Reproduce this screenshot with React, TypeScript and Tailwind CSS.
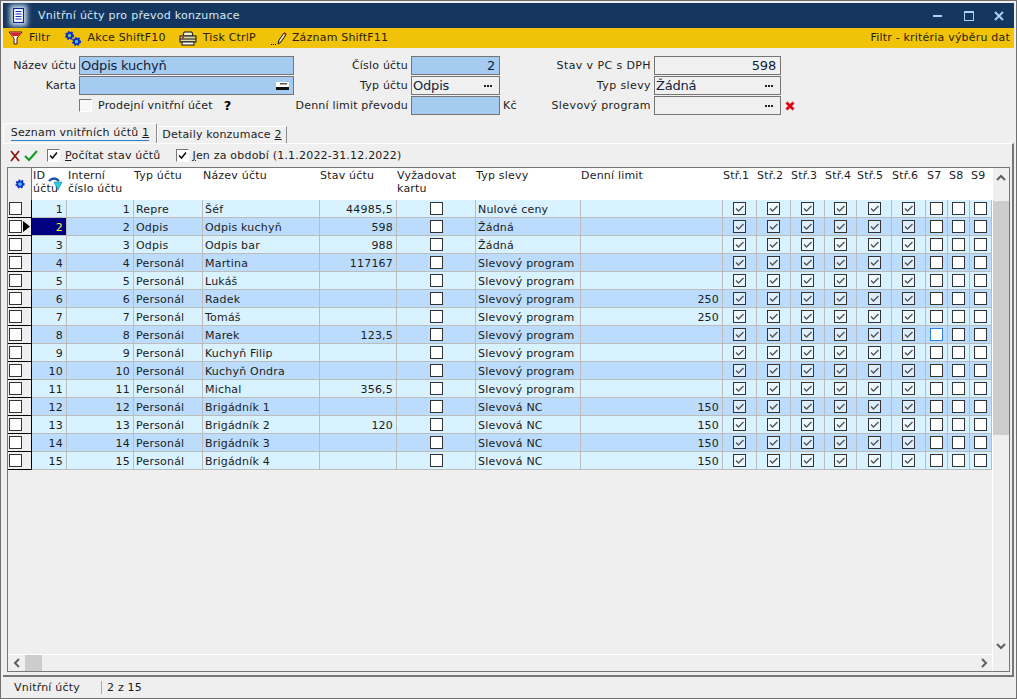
import React from "react";

type Row = {
	id: number;
	typ: string;
	nazev: string;
	stav: string;
	sleva: string;
	limit: string;
};

const rows: Row[] = [
	{ id: 1, typ: "Repre", nazev: "Šéf", stav: "44985,5", sleva: "Nulové ceny", limit: "" },
	{ id: 2, typ: "Odpis", nazev: "Odpis kuchyň", stav: "598", sleva: "Žádná", limit: "" },
	{ id: 3, typ: "Odpis", nazev: "Odpis bar", stav: "988", sleva: "Žádná", limit: "" },
	{ id: 4, typ: "Personál", nazev: "Martina", stav: "117167", sleva: "Slevový program", limit: "" },
	{ id: 5, typ: "Personál", nazev: "Lukáš", stav: "", sleva: "Slevový program", limit: "" },
	{ id: 6, typ: "Personál", nazev: "Radek", stav: "", sleva: "Slevový program", limit: "250" },
	{ id: 7, typ: "Personál", nazev: "Tomáš", stav: "", sleva: "Slevový program", limit: "250" },
	{ id: 8, typ: "Personál", nazev: "Marek", stav: "123,5", sleva: "Slevový program", limit: "" },
	{ id: 9, typ: "Personál", nazev: "Kuchyň Filip", stav: "", sleva: "Slevový program", limit: "" },
	{ id: 10, typ: "Personál", nazev: "Kuchyň Ondra", stav: "", sleva: "Slevový program", limit: "" },
	{ id: 11, typ: "Personál", nazev: "Michal", stav: "356,5", sleva: "Slevový program", limit: "" },
	{ id: 12, typ: "Personál", nazev: "Brigádník 1", stav: "", sleva: "Slevová NC", limit: "150" },
	{ id: 13, typ: "Personál", nazev: "Brigádník 2", stav: "120", sleva: "Slevová NC", limit: "150" },
	{ id: 14, typ: "Personál", nazev: "Brigádník 3", stav: "", sleva: "Slevová NC", limit: "150" },
	{ id: 15, typ: "Personál", nazev: "Brigádník 4", stav: "", sleva: "Slevová NC", limit: "150" },
];

const colWidths = [24, 35, 67, 69, 117, 77, 79, 105, 142, 34, 34, 34, 32, 35, 34, 22, 22, 22];
const strediska = ["Stř.1", "Stř.2", "Stř.3", "Stř.4", "Stř.5", "Stř.6"];

function GearIcon({ x = 0, y = 0, r = 4 }: { x?: number; y?: number; r?: number }) {
	return (
		<g>
			<circle cx={x} cy={y} r={r} fill="none" stroke="#0a2fd0" strokeWidth={r * 0.75} />
			<circle cx={x} cy={y} r={r + 1.2} fill="none" stroke="#0a2fd0" strokeWidth={1.6} strokeDasharray="1.6 1.6" />
			<circle cx={x} cy={y} r={r * 0.45} fill="#14d4f0" />
		</g>
	);
}

function GridBox({ checked, focus }: { checked?: boolean; focus?: boolean }) {
	return (
		<span
			className={`mx-auto flex h-[13px] w-[13px] items-center justify-center border ${
				checked ? "bg-white/50" : "bg-white"
			} ${focus ? "border-[#2f7fe0]" : "border-[#333333]"}`}
		>
			{checked && (
				<svg width="11" height="11" viewBox="0 0 11 11">
					<path d="M2 5.5 L4.5 8 L9.5 3" fill="none" stroke="#555555" strokeWidth="1.4" />
				</svg>
			)}
		</span>
	);
}

function BlackCheck({ light }: { light?: boolean }) {
	return (
		<span
			className={`flex h-[13px] w-[13px] shrink-0 items-center justify-center border border-[#777777] border-r-white border-b-white ${
				light ? "bg-[#f7f7f7]" : "bg-white"
			}`}
		>
			{!light && (
				<svg width="11" height="11" viewBox="0 0 11 11">
					<path d="M2 5.5 L4.5 8 L9 2.5" fill="none" stroke="#111111" strokeWidth="1.6" />
				</svg>
			)}
		</span>
	);
}

function Dots() {
	return (
		<svg width="8" height="2" viewBox="0 0 8 2" className="mr-[3px]">
			<path d="M0 0h2v2H0zM3 0h2v2H3zM6 0h2v2H6z" fill="#222222" />
		</svg>
	);
}

function Field({
	w,
	blue,
	right,
	children,
	tail,
}: {
	w: string;
	blue?: boolean;
	right?: boolean;
	children?: React.ReactNode;
	tail?: React.ReactNode;
}) {
	return (
		<div
			className={`flex h-[19px] items-center border border-[#757575] pl-[1px] pr-[4px] text-[13px] leading-none tracking-[-0.2px] text-[#10233a] ${w} ${
				blue ? "bg-[#a6cbf0]" : "bg-[#f0f0f0]"
			} ${right ? "justify-end" : "justify-between"}`}
		>
			{children && <span>{children}</span>}
			{!children && <span />}
			{tail}
		</div>
	);
}

function Label({ w, children }: { w: string; children: React.ReactNode }) {
	return <div className={`mr-[3px] shrink-0 whitespace-nowrap text-right ${w}`}>{children}</div>;
}

export default function App() {
	return (
		<div
			className="flex h-[699px] w-[1017px] flex-col border border-[#707070] bg-[#efefef] px-[2px] pt-[2px] text-[11px] leading-[14px] tracking-[0.2px] text-[#1c1c1c]"
			style={{ fontFamily: '"DejaVu Sans", Verdana, sans-serif' }}
		>
			{/* title bar */}
			<div className="flex h-[25px] shrink-0 items-center bg-[#15375f] pl-[10px] text-[#d8e8f8]">
				<div className="flex h-[15px] w-[11px] items-center justify-center bg-white shadow-[0_0_5px_3px_#c8dcf2]">
					<svg width="11" height="15" viewBox="0 0 11 15">
						<rect x="0.5" y="0.5" width="10" height="14" fill="#ffffff" stroke="#0b2a8c" strokeWidth="1.2" />
						<path d="M2.5 3.5h6M2.5 6h6M2.5 8.500h6M2.500 11h6" stroke="#1030b0" strokeWidth="1.100" />
					</svg>
				</div>
				<span className="ml-[14px] tracking-[0.27px]">Vnitřní účty pro převod konzumace</span>
				<div className="ml-auto flex items-center pr-[4px]">
					<span className="mr-[22px] h-[2px] w-[9px] bg-[#a9d0f5]" />
					<span className="mr-[20px] h-[10px] w-[10px] border border-t-2 border-[#a9d0f5]" />
					<svg width="10" height="10" viewBox="0 0 10 10" className="mr-[6px]">
						<path d="M1 1 L9 9 M9 1 L1 9" stroke="#a9d0f5" strokeWidth="2" />
					</svg>
				</div>
			</div>

			{/* yellow toolbar */}
			<div className="flex h-[20px] shrink-0 items-center bg-[#f0c30a] pl-[5px] pr-[4px] text-[#2a1c00]">
				<svg width="15" height="14" viewBox="0 0 15 14">
					<path d="M1 1 H14 L9 7 V13 H6 V7 Z" fill="#ffffff" stroke="#5a1010" strokeWidth="1" />
					<path d="M2 1.5 H13 L10 5 H5 Z" fill="#d81e2c" />
				</svg>
				<span className="ml-[6px]">Filtr</span>
				<svg width="18" height="17" viewBox="0 0 18 17" className="ml-[14px]">
					<GearIcon x={5.5} y={5.5} r={2.6} />
					<GearIcon x={12.5} y={11.5} r={2.6} />
				</svg>
				<span className="ml-[5px]">Akce ShiftF10</span>
				<svg width="18" height="15" viewBox="0 0 18 15" className="ml-[13px]">
					<path d="M5 1 H13 L14 5 H4 Z" fill="#f4f0c8" stroke="#111111" />
					<rect x="1" y="5" width="16" height="6" fill="#ddd8a8" stroke="#111111" />
					<path d="M1 8 H17" stroke="#111111" />
					<rect x="3" y="11" width="12" height="3" fill="#ffffff" stroke="#111111" />
					<rect x="3" y="6" width="2" height="1.5" fill="#d02020" />
				</svg>
				<span className="ml-[6px]">Tisk CtrlP</span>
				<svg width="16" height="15" viewBox="0 0 16 15" className="ml-[15px]">
					<path d="M0 13.5 H5" stroke="#111111" strokeDasharray="1 1" />
					<path d="M7 13 L8 9 L13 2 L15 3.5 L10 11 Z" fill="#f6e8a0" stroke="#111111" />
					<path d="M12.5 2.5 L13.5 1.2 L15.4 2.6 L14.6 4 Z" fill="#a01818" />
				</svg>
				<span className="ml-[5px]">Záznam ShiftF11</span>
				<span className="ml-auto">Filtr - kritéria výběru dat</span>
			</div>

			{/* filter form */}
			<div className="flex h-[75px] shrink-0 flex-col gap-[1px] pt-[8px]">
				<div className="flex items-center">
					<Label w="w-[73px] tracking-[0.1px]">Název účtu</Label>
					<Field w="w-[215px]" blue>Odpis kuchyň</Field>
					<Label w="w-[114px]">Číslo účtu</Label>
					<Field w="w-[89px]" blue right>2</Field>
					<Label w="w-[151px] tracking-[0.4px]">Stav v PC s DPH</Label>
					<Field w="w-[127px]" right>598</Field>
				</div>
				<div className="flex items-center">
					<Label w="w-[73px]">Karta</Label>
					<Field
						w="w-[215px]"
						blue
						tail={
							<svg width="13" height="8" viewBox="0 0 13 8">
								<rect x="0" y="0" width="13" height="8" fill="#ffffff" />
								<rect x="0" y="5" width="13" height="3" fill="#111111" />
								<rect x="4" y="1" width="7" height="1.5" fill="#555555" />
							</svg>
						}
					/>
					<Label w="w-[114px]">Typ účtu</Label>
					<Field w="w-[89px]" tail={<Dots />}>Odpis</Field>
					<Label w="w-[151px] tracking-[0.4px]">Typ slevy</Label>
					<Field w="w-[127px]" tail={<Dots />}>Žádná</Field>
				</div>
				<div className="flex items-center">
					<div className="ml-[76px] flex w-[215px] items-center">
						<BlackCheck light />
						<span className="ml-[6px]">Prodejní vnitřní účet</span>
						<span className="ml-[11px] text-[13px] font-bold text-black">?</span>
					</div>
					<Label w="w-[114px]">Denní limit převodu</Label>
					<Field w="w-[89px]" blue />
					<span className="ml-[3px] w-[32px]">Kč</span>
					<Label w="w-[116px] tracking-[0.4px]">Slevový program</Label>
					<Field w="w-[127px]" tail={<Dots />} />
					<svg width="10" height="10" viewBox="0 0 10 10" className="ml-[4px]">
						<path d="M1.5 1.5 L8.5 8.5 M8.5 1.5 L1.5 8.5" stroke="#e00010" strokeWidth="2.8" />
					</svg>
				</div>
			</div>

			{/* tabs */}
			<div className="flex h-[20px] shrink-0 items-end">
				<div className="flex h-[20px] w-[154px] justify-center rounded-t-[2px] border-t border-r border-l border-t-white border-r-[#8a8a8a] border-l-white pt-[2px]">
					<span className="h-[15px] border-b border-[#2a80d0]">
						Seznam vnitřních účtů <u>1</u>
					</span>
				</div>
				<div className="flex h-[17px] w-[130px] justify-center border-t border-r border-l border-t-white border-r-[#8a8a8a] border-l-white pt-[1px]">
					<span>
						Detaily konzumace <u>2</u>
					</span>
				</div>
			</div>

			{/* tab panel */}
			<div className="flex min-h-0 flex-1 flex-col border-t border-r-2 border-b-2 border-t-white border-r-[#777777] border-b-[#777777] pl-[4px] pr-[2px] pb-[3px]">
				<div className="flex h-[23px] shrink-0 items-center">
					<svg width="12" height="12" viewBox="0 0 12 12" className="ml-[2px]">
						<path d="M2 1 L10 11 M10 1 L2 11" stroke="#8a1414" strokeWidth="1.7" />
					</svg>
					<svg width="14" height="12" viewBox="0 0 14 12" className="ml-[3px]">
						<path d="M1 6 L5 10 L13 1" fill="none" stroke="#1c9a28" strokeWidth="2.2" />
					</svg>
					<div className="ml-[9px]"><BlackCheck /></div>
					<span className="ml-[5px]">
						<u>P</u>očítat stav účtů
					</span>
					<div className="ml-[16px]"><BlackCheck /></div>
					<span className="ml-[3px]">
						<u>J</u>en za období (1.1.2022-31.12.2022)
					</span>
				</div>

				{/* grid with scrollbars */}
				<div className="flex min-h-0 flex-1 border border-[#777777]">
					<div className="flex min-w-0 flex-1 flex-col border-r border-white">
						<div className="min-h-0 flex-1 overflow-hidden">
							<table className="w-[984px] table-fixed border-separate border-spacing-0">
								<colgroup>
									{colWidths.map((w, i) => (
										<col key={i} style={{ width: w }} />
									))}
								</colgroup>
								<thead>
									<tr className="h-[32px] bg-white text-left align-top">
										<th className="border-r border-[#777777] bg-[#efefef] align-middle font-normal">
											<svg width="12" height="12" viewBox="0 0 12 12" className="mx-auto">
												<GearIcon x={6} y={6} r={2.6} />
											</svg>
										</th>
										<th className="relative pl-[1px] pt-[1px] font-normal leading-[13px]">
											ID
											<br />
											účtu
											<svg width="15" height="15" viewBox="0 0 15 15" className="absolute left-[16px] top-[8px]">
												<path d="M1 5 Q6 0 11 5" fill="none" stroke="#1a50b0" strokeWidth="2.4" />
												<path d="M6 6 H14 L10 14 Z" fill="#20d0e8" stroke="#108090" strokeWidth="0.6" />
											</svg>
										</th>
										<th className="pl-[1px] pt-[1px] font-normal leading-[13px]">
											Interní
											<br />
											číslo účtu
										</th>
										<th className="pt-[1px] font-normal leading-[13px]">Typ účtu</th>
										<th className="pt-[1px] font-normal leading-[13px]">Název účtu</th>
										<th className="pt-[1px] font-normal leading-[13px]">Stav účtu</th>
										<th className="pt-[1px] font-normal leading-[13px]">
											Vyžadovat
											<br />
											kartu
										</th>
										<th className="pt-[1px] font-normal leading-[13px]">Typ slevy</th>
										<th className="pt-[1px] font-normal leading-[13px]">Denní limit</th>
										{strediska.map((s) => (
											<th key={s} className="whitespace-nowrap pt-[1px] font-normal leading-[13px]">{s}</th>
										))}
										<th className="pl-[1px] pt-[1px] font-normal leading-[13px]">S7</th>
										<th className="pl-[1px] pt-[1px] font-normal leading-[13px]">S8</th>
										<th className="pl-[1px] pt-[1px] font-normal leading-[13px]">S9</th>
									</tr>
								</thead>
								<tbody>
									{rows.map((r, i) => {
										const td = "h-[18px] overflow-hidden whitespace-nowrap border-b border-r border-[#bcbcbc] p-0 leading-none";
										const txt = `${td} pt-[2px]`;
										const selected = r.id === 2;
										return (
											<tr key={r.id} className={i % 2 === 0 ? "bg-[#d9f2ff]" : "bg-[#bbdcfd]"}>
												<td className="relative h-[18px] border-r border-b border-black bg-[#efefef] p-0">
													<span className="ml-[1px] block h-[13px] w-[13px] border border-[#333333] bg-white" />
													{selected && (
														<svg width="7" height="11" viewBox="0 0 7 11" className="absolute right-[1px] top-[3px]">
															<path d="M0 0 L7 5.5 L0 11 Z" fill="#000000" />
														</svg>
													)}
												</td>
												<td className={`${txt} pr-[3px] text-right ${selected ? "bg-[#000080] text-[#ffff40]" : ""}`}>{r.id}</td>
												<td className={`${txt} pr-[3px] text-right`}>{r.id}</td>
												<td className={`${txt} pl-[2px]`}>{r.typ}</td>
												<td className={`${txt} pl-[2px]`}>{r.nazev}</td>
												<td className={`${txt} pr-[3px] text-right`}>{r.stav}</td>
												<td className={td}><GridBox /></td>
												<td className={`${txt} pl-[2px]`}>{r.sleva}</td>
												<td className={`${txt} pr-[3px] text-right`}>{r.limit}</td>
												{strediska.map((s) => (
													<td key={s} className={td}><GridBox checked /></td>
												))}
												<td className={td}><GridBox focus={r.id === 8} /></td>
												<td className={td}><GridBox /></td>
												<td className={td}><GridBox /></td>
											</tr>
										);
									})}
								</tbody>
							</table>
						</div>
						{/* horizontal scrollbar */}
						<div className="flex h-[17px] shrink-0 items-center border-t border-white pl-[5px]">
							<svg width="8" height="10" viewBox="0 0 8 10">
								<path d="M6 1 L2 5 L6 9" fill="none" stroke="#606060" strokeWidth="2" />
							</svg>
							<span className="ml-[4px] h-[16px] w-[17px] bg-[#cdcdcd]" />
							<svg width="8" height="10" viewBox="0 0 8 10" className="ml-auto mr-[4px]">
								<path d="M2 1 L6 5 L2 9" fill="none" stroke="#606060" strokeWidth="2" />
							</svg>
						</div>
					</div>
					{/* vertical scrollbar */}
					<div className="flex w-[16px] shrink-0 flex-col items-center">
						<div className="flex h-[33px] items-start pt-[6px]">
							<svg width="10" height="8" viewBox="0 0 10 8">
								<path d="M1 6 L5 2 L9 6" fill="none" stroke="#606060" strokeWidth="2" />
							</svg>
						</div>
						<div className="h-[234px] w-full bg-[#cdcdcd]" />
						<div className="mt-auto pb-[21px]">
							<svg width="10" height="8" viewBox="0 0 10 8">
								<path d="M1 2 L5 6 L9 2" fill="none" stroke="#606060" strokeWidth="2" />
							</svg>
						</div>
					</div>
				</div>
			</div>

			{/* status bar */}
			<div className="flex h-[21px] shrink-0 items-center pl-[11px]">
				<span className="w-[87px]">Vnitřní účty</span>
				<span className="h-[13px] border-l border-[#a8a8a8] pl-[5px] leading-[13px]">2 z 15</span>
			</div>
		</div>
	);
}
